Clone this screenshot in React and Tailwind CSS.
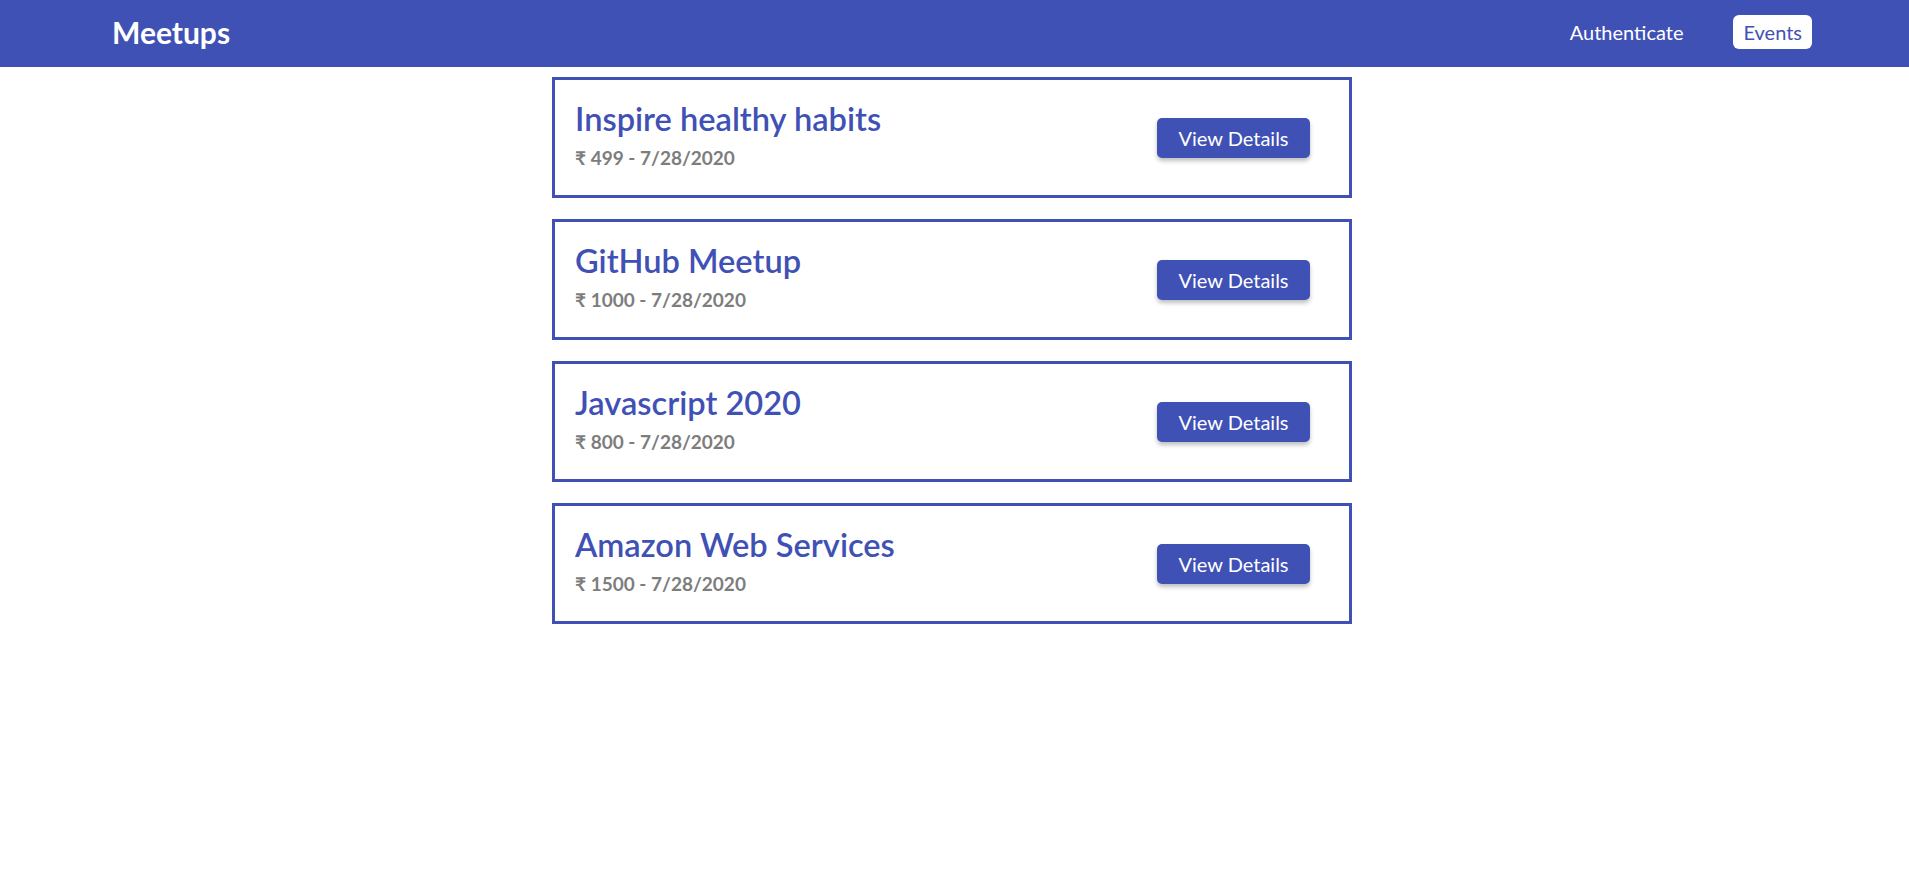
import React from 'react';

const events = [
    { title: 'Inspire healthy habits', price: 499, date: '7/28/2020' },
    { title: 'GitHub Meetup', price: 1000, date: '7/28/2020' },
    { title: 'Javascript 2020', price: 800, date: '7/28/2020' },
    { title: 'Amazon Web Services', price: 1500, date: '7/28/2020' },
];

// --- Single event card ---
const EventCard = ({ event }) => (
    <div className="w-[800px] h-[121px] border-[3px] border-[#3f51b5] flex items-center justify-between pl-5 pr-[39px]">
        <div className="pb-[6px]">
            <h2 className="text-[32.6px] leading-[38px] text-[#3f51b5] font-semibold">{event.title}</h2>
            <p className="text-[19px] leading-[24px] font-bold text-[#7d7d7d] mt-[8px]">
                ₹ {event.price} - {event.date}
            </p>
        </div>
        <button className="w-[153px] h-[40px] rounded-[5px] bg-[#3f51b5] text-white text-[20px] shadow-[0_3px_4px_rgba(0,0,0,0.25)]">
            View Details
        </button>
    </div>
);

export default function App() {
    return (
        <div className="min-h-screen bg-white font-['Lato',sans-serif]">
            {/* --- Top bar --- */}
            <header className="h-[67px] bg-[#3f51b5] flex items-center justify-between pl-[112px] pr-[97px]">
                <h1 className="text-[30px] font-bold text-white pb-[2px]">Meetups</h1>
                <nav className="flex items-center gap-[50px] pb-[4px]">
                    <a className="text-[20px] text-white cursor-pointer">Authenticate</a>
                    <a className="h-[34px] px-[10px] flex items-center rounded-[6px] bg-white text-[20px] text-[#3f51b5] cursor-pointer">Events</a>
                </nav>
            </header>

            {/* --- Event list --- */}
            <main className="flex flex-col items-center gap-[21px] pt-[10px] pr-[5px]">
                {events.map((event) => (
                    <EventCard key={event.title} event={event} />
                ))}
            </main>
        </div>
    );
}
